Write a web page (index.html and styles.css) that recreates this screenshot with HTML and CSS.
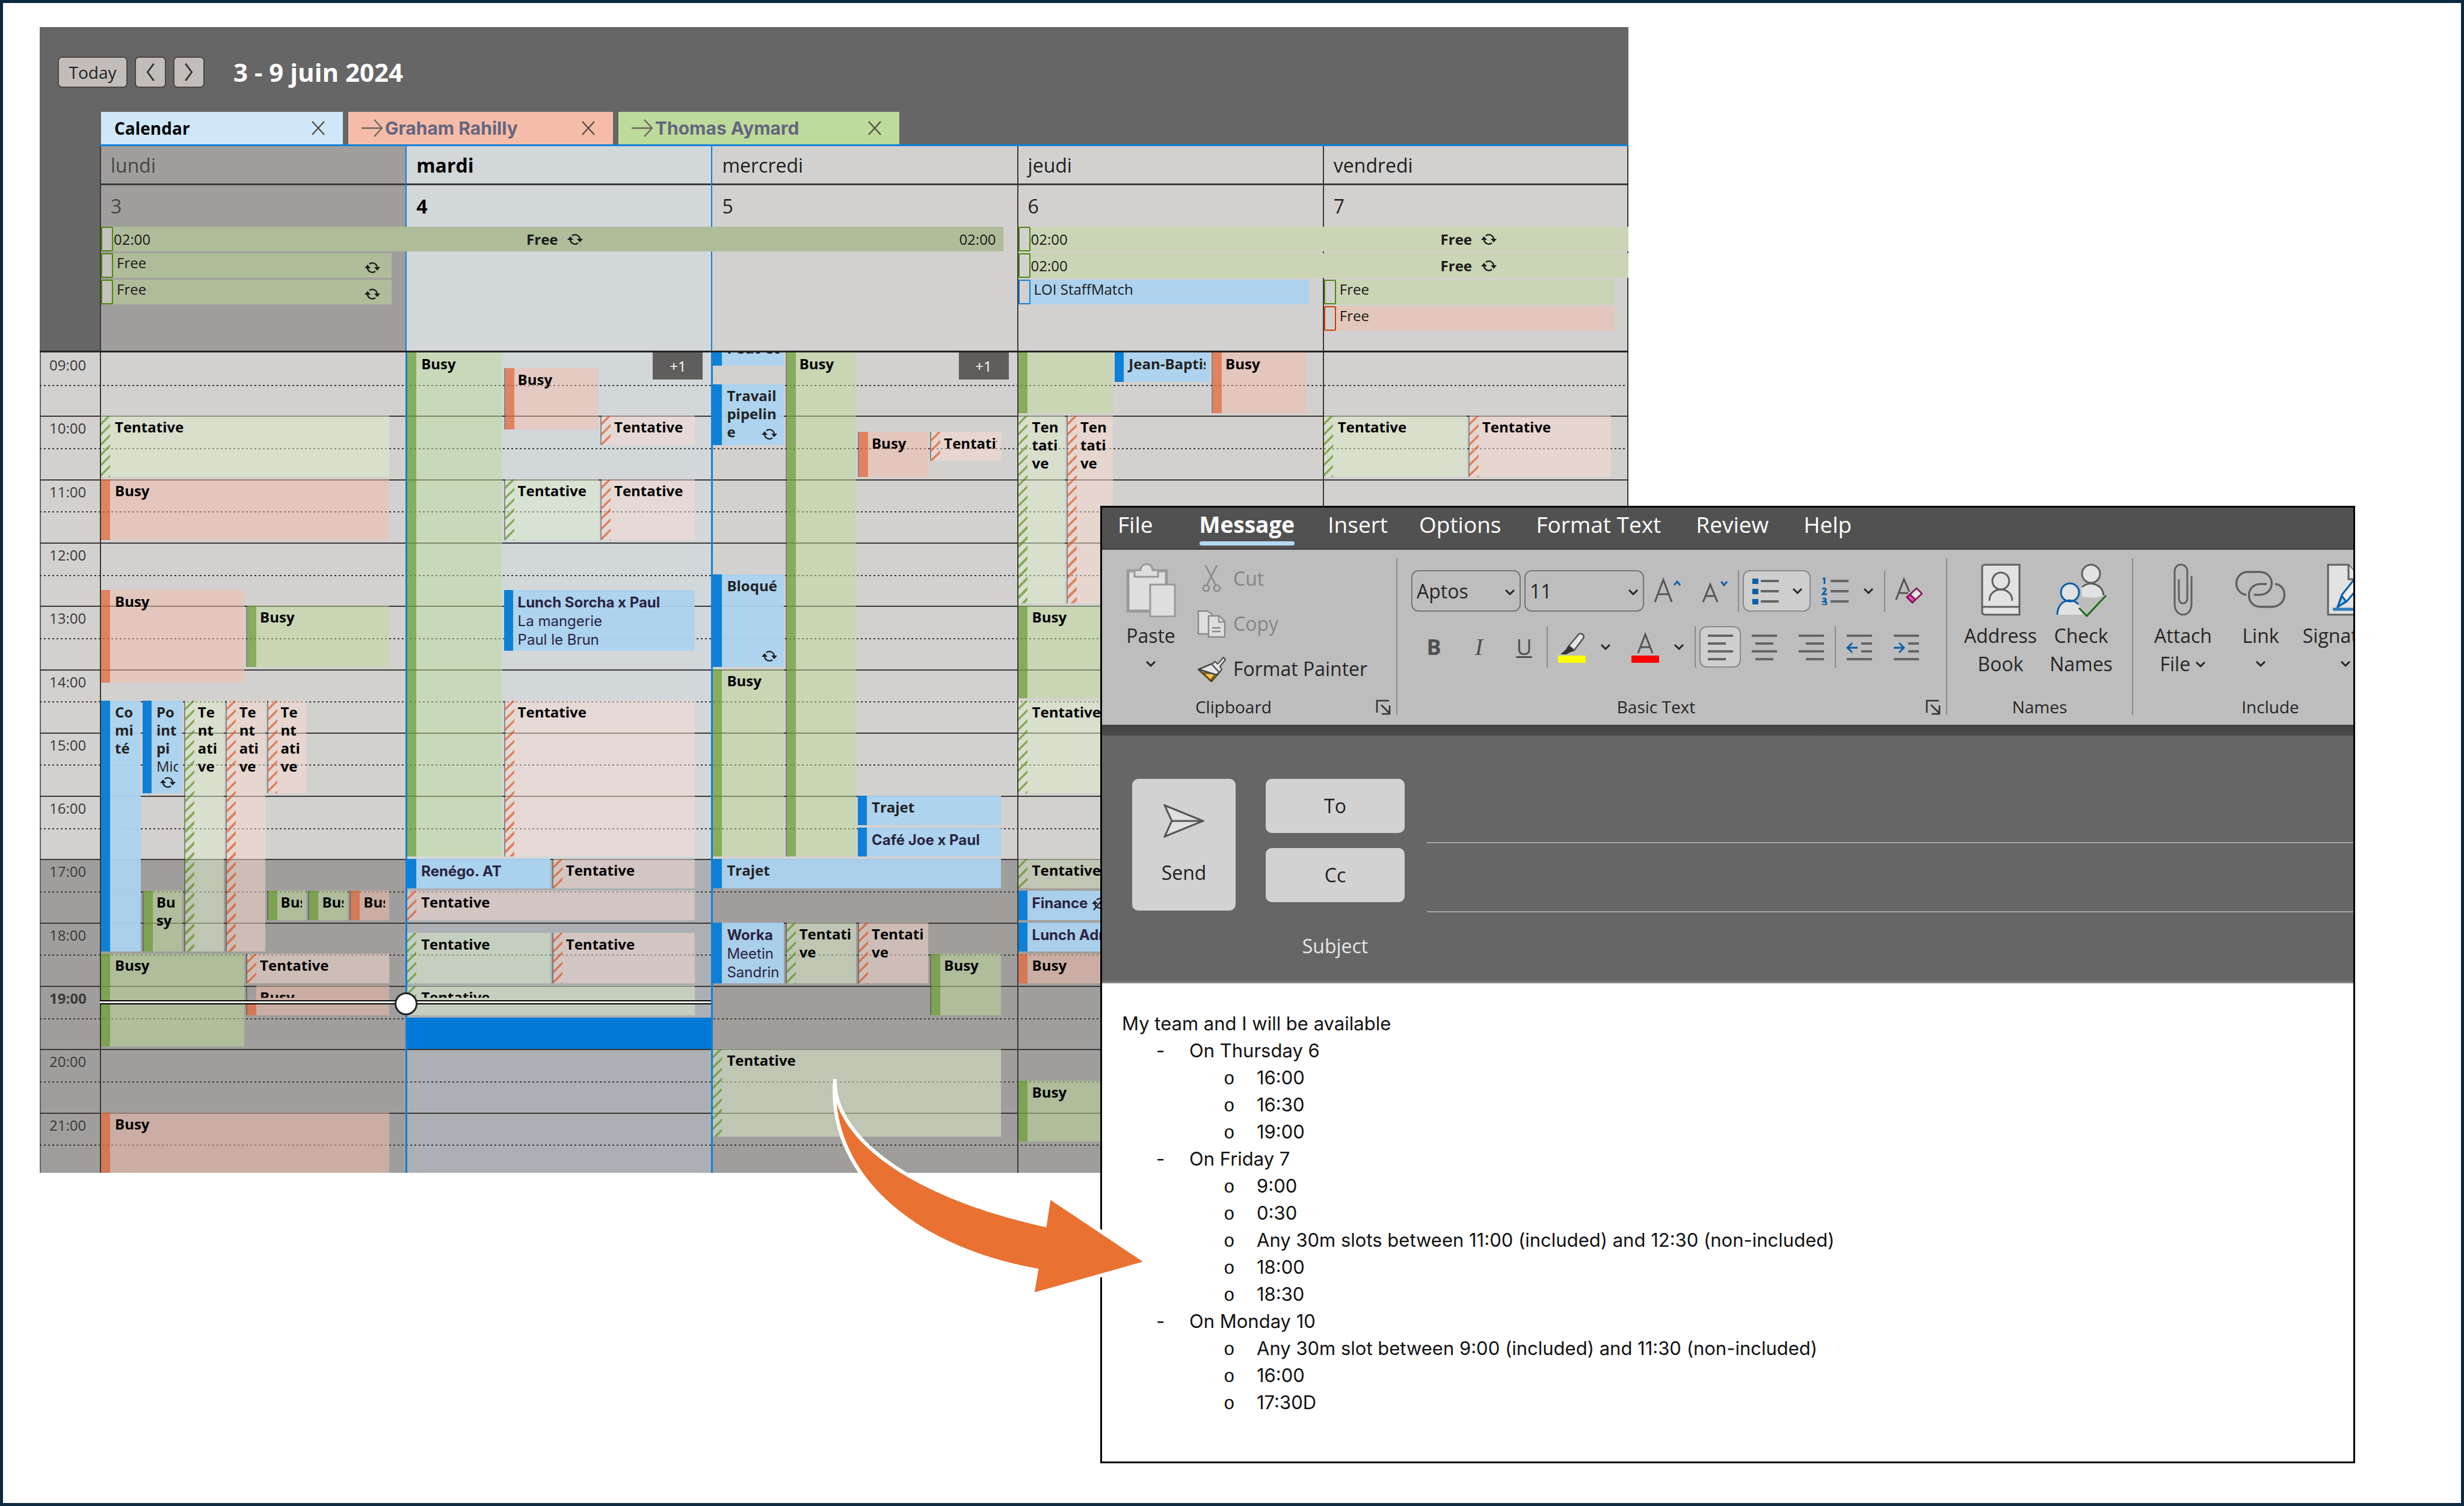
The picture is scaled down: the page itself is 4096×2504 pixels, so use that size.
FILE: index.html
```html
<!DOCTYPE html>
<html lang="en">
<head>
    <meta charset="UTF-8">
    <meta name="viewport" content="width=device-width, initial-scale=1.0">
    <title>Calendar availability to message</title>
    <link rel="stylesheet" href="styles.css">
</head>
<body>
    <!-- Shared icons -->
    <svg class="sprite" aria-hidden="true">
        <symbol id="recur" viewBox="0 0 28 24">
            <path d="M9 6a8 8 0 0 1 13 6M19 18a8 8 0 0 1-13-6" fill="none" stroke="currentColor" stroke-width="2.4"/>
            <path d="M17 11h10l-5 6zM1 13h10l-5-6z" fill="currentColor"/>
        </symbol>
        <symbol id="chevron" viewBox="0 0 18 12">
            <path d="M2 2l7 7 7-7" fill="none" stroke="currentColor" stroke-width="3"/>
        </symbol>
        <symbol id="close" viewBox="0 0 22 26">
            <path d="M1 2l20 22M21 2L1 24" fill="none" stroke="currentColor" stroke-width="2.4"/>
        </symbol>
        <symbol id="arrow-right" viewBox="0 0 36 32">
            <path d="M0 16h34M21 2l13 14-13 14" fill="none" stroke="currentColor" stroke-width="2.4"/>
        </symbol>
        <symbol id="launcher" viewBox="0 0 26 26">
            <path d="M2 22V2h20M9 9l13 13M23 10v14H10" fill="none" stroke="#333" stroke-width="2.6"/>
        </symbol>
    </svg>

    <main class="slide">
        <section class="calendar">
            <header class="toolbar">
                <button class="nav-btn today">Today</button>
                <button class="nav-btn" aria-label="Previous week"><svg viewBox="0 0 16 34"><path d="M14 2L3 17l11 15"/></svg></button>
                <button class="nav-btn" aria-label="Next week"><svg viewBox="0 0 16 34"><path d="M2 2l11 15L2 32"/></svg></button>
                <h1>3 - 9 juin 2024</h1>
            </header>

            <div class="tabs">
                <div class="tab tab-own"><span>Calendar</span><button aria-label="Close"><svg><use href="#close"/></svg></button></div>
                <div class="tab tab-graham"><svg class="tab-arrow"><use href="#arrow-right"/></svg><span>Graham Rahilly</span><button aria-label="Close"><svg><use href="#close"/></svg></button></div>
                <div class="tab tab-thomas"><svg class="tab-arrow"><use href="#arrow-right"/></svg><span>Thomas Aymard</span><button aria-label="Close"><svg><use href="#close"/></svg></button></div>
            </div>

            <div class="week-head">
                <div class="day-head mon past"><h2>lundi</h2><p>3</p></div>
                <div class="day-head tue today"><h2>mardi</h2><p>4</p></div>
                <div class="day-head wed after-today"><h2>mercredi</h2><p>5</p></div>
                <div class="day-head thu"><h2>jeudi</h2><p>6</p></div>
                <div class="day-head fri"><h2>vendredi</h2><p>7</p></div>

                <!-- All day events -->
                <div class="allday green dim span mon-wed slot-1"><span>02:00</span><b>Free <svg><use href="#recur"/></svg></b><span>02:00</span></div>
                <div class="allday green dim mon slot-2"><span>Free</span><svg><use href="#recur"/></svg></div>
                <div class="allday green dim mon slot-3"><span>Free</span><svg><use href="#recur"/></svg></div>
                <div class="allday green span open thu-fri slot-1"><span>02:00</span><b>Free <svg><use href="#recur"/></svg></b></div>
                <div class="allday green span open thu-fri slot-2"><span>02:00</span><b>Free <svg><use href="#recur"/></svg></b></div>
                <div class="allday blue thu slot-3"><span>LOI StaffMatch</span></div>
                <div class="allday green fri slot-3"><span>Free</span></div>
                <div class="allday orange fri slot-4"><span>Free</span></div>
            </div>

            <div class="viewport">
                <div class="time-grid">
                    <div class="shade"></div>
                    <div class="shade shade-today"></div>
                    <ol class="hours">
                        <li>09:00</li>
                        <li>10:00</li>
                        <li>11:00</li>
                        <li>12:00</li>
                        <li>13:00</li>
                        <li>14:00</li>
                        <li>15:00</li>
                        <li>16:00</li>
                        <li>17:00</li>
                        <li>18:00</li>
                        <li class="now">19:00</li>
                        <li>20:00</li>
                        <li>21:00</li>
                    </ol>

                    <!-- Each day: 156 rows of 5 minutes from 09:00, 84 columns for overlaps -->
                    <div class="day mon">
                        <div class="event green tentative" style="grid-area: 13 / 1 / 25 / 85"><p>Tentative</p></div>
                        <div class="event orange" style="grid-area: 25 / 1 / 37 / 85"><p>Busy</p></div>
                        <div class="event orange" style="grid-area: 46 / 1 / 64 / 43"><p>Busy</p></div>
                        <div class="event green inner" style="grid-area: 49 / 43 / 61 / 85"><p>Busy</p></div>
                        <div class="event blue" style="grid-area: 67 / 1 / 115 / 13"><p>Co<br>mi<br>té</p></div>
                        <div class="event blue" style="grid-area: 67 / 13 / 85 / 25"><p>Po<br>int<br>pi<br><span>Mic</span></p><svg><use href="#recur"/></svg></div>
                        <div class="event green tentative inner" style="grid-area: 67 / 25 / 115 / 37"><p>Te<br>nt<br>ati<br>ve</p></div>
                        <div class="event orange tentative inner" style="grid-area: 67 / 37 / 115 / 49"><p>Te<br>nt<br>ati<br>ve</p></div>
                        <div class="event orange tentative inner" style="grid-area: 67 / 49 / 85 / 61"><p>Te<br>nt<br>ati<br>ve</p></div>
                        <div class="event green inner" style="grid-area: 103 / 13 / 115 / 25"><p>Bu<br>sy</p></div>
                        <div class="event green inner" style="grid-area: 103 / 49 / 109 / 61"><p>Busy</p></div>
                        <div class="event green inner" style="grid-area: 103 / 61 / 109 / 73"><p>Busy</p></div>
                        <div class="event orange inner" style="grid-area: 103 / 73 / 109 / 85"><p>Busy</p></div>
                        <div class="event green" style="grid-area: 115 / 1 / 133 / 43"><p>Busy</p></div>
                        <div class="event orange tentative inner" style="grid-area: 115 / 43 / 121 / 85"><p>Tentative</p></div>
                        <div class="event orange inner under-now" style="grid-area: 121 / 43 / 127 / 85"><p>Busy</p></div>
                        <div class="event orange" style="grid-area: 145 / 1 / 157 / 85"><p>Busy</p></div>
                    </div>

                    <div class="day tue today">
                        <div class="event green" style="grid-area: 1 / 1 / 97 / 29"><p>Busy</p></div>
                        <div class="event orange inner" style="grid-area: 4 / 29 / 16 / 57"><p>Busy</p></div>
                        <div class="event orange tentative inner" style="grid-area: 13 / 57 / 19 / 85"><p>Tentative</p></div>
                        <div class="event green tentative inner" style="grid-area: 25 / 29 / 37 / 57"><p>Tentative</p></div>
                        <div class="event orange tentative inner" style="grid-area: 25 / 57 / 37 / 85"><p>Tentative</p></div>
                        <div class="event blue named" style="grid-area: 46 / 29 / 58 / 85"><p>Lunch Sorcha x Paul<br><span>La mangerie<br>Paul le Brun</span></p></div>
                        <div class="event orange tentative inner" style="grid-area: 67 / 29 / 97 / 85"><p>Tentative</p></div>
                        <div class="event blue named" style="grid-area: 97 / 1 / 103 / 43"><p>Renégo. AT</p></div>
                        <div class="event orange tentative inner" style="grid-area: 97 / 43 / 103 / 85"><p>Tentative</p></div>
                        <div class="event orange tentative" style="grid-area: 103 / 1 / 109 / 85"><p>Tentative</p></div>
                        <div class="event green tentative" style="grid-area: 111 / 1 / 121 / 43"><p>Tentative</p></div>
                        <div class="event orange tentative inner" style="grid-area: 111 / 43 / 121 / 85"><p>Tentative</p></div>
                        <div class="event green tentative under-now" style="grid-area: 121 / 1 / 127 / 85"><p>Tentative</p></div>
                        <div class="selection"></div>
                        <button class="more">+1</button>
                    </div>

                    <div class="day wed after-today">
                        <div class="event blue earlier" style="grid-area: 1 / 1 / 4 / 22"><p>Peut-êt</p></div>
                        <div class="event green inner" style="grid-area: 1 / 22 / 97 / 43"><p>Busy</p></div>
                        <div class="event blue" style="grid-area: 7 / 1 / 19 / 22"><p>Travail<br>pipelin<br>e</p><svg><use href="#recur"/></svg></div>
                        <div class="event orange inner" style="grid-area: 16 / 43 / 25 / 64"><p>Busy</p></div>
                        <div class="event orange tentative inner" style="grid-area: 16 / 64 / 22 / 85"><p>Tentative</p></div>
                        <div class="event blue" style="grid-area: 43 / 1 / 61 / 22"><p>Bloqué</p><svg><use href="#recur"/></svg></div>
                        <div class="event green" style="grid-area: 61 / 1 / 97 / 22"><p>Busy</p></div>
                        <div class="event blue" style="grid-area: 85 / 43 / 91 / 85"><p>Trajet</p></div>
                        <div class="event blue named" style="grid-area: 91 / 43 / 97 / 85"><p>Café Joe x Paul</p></div>
                        <div class="event blue" style="grid-area: 97 / 1 / 103 / 85"><p>Trajet</p></div>
                        <div class="event blue named" style="grid-area: 109 / 1 / 121 / 22"><p>Worka<br><span>Meetin<br>Sandrin</span></p></div>
                        <div class="event green tentative inner" style="grid-area: 109 / 22 / 121 / 43"><p>Tentati<br>ve</p></div>
                        <div class="event orange tentative inner" style="grid-area: 109 / 43 / 121 / 64"><p>Tentati<br>ve</p></div>
                        <div class="event green inner" style="grid-area: 115 / 64 / 127 / 85"><p>Busy</p></div>
                        <div class="event green tentative" style="grid-area: 133 / 1 / 150 / 85"><p>Tentative</p></div>
                        <button class="more">+1</button>
                    </div>

                    <div class="day thu">
                        <div class="event green" style="grid-area: 1 / 1 / 13 / 29"></div>
                        <div class="event blue" style="grid-area: 1 / 29 / 7 / 57"><p>Jean-Baptiste</p></div>
                        <div class="event orange inner" style="grid-area: 1 / 57 / 13 / 85"><p>Busy</p></div>
                        <div class="event green tentative" style="grid-area: 13 / 1 / 49 / 15"><p>Ten<br>tati<br>ve</p></div>
                        <div class="event orange tentative inner" style="grid-area: 13 / 15 / 49 / 29"><p>Ten<br>tati<br>ve</p></div>
                        <div class="event green" style="grid-area: 49 / 1 / 67 / 85"><p>Busy</p></div>
                        <div class="event green tentative" style="grid-area: 67 / 1 / 85 / 85"><p>Tentative</p></div>
                        <div class="event green tentative" style="grid-area: 97 / 1 / 103 / 85"><p>Tentative</p></div>
                        <div class="event blue named" style="grid-area: 103 / 1 / 109 / 85"><p>Finance <svg class="exception"><use href="#recur"/><path d="M4 23L23 1" stroke="#222" stroke-width="2.4"/></svg></p></div>
                        <div class="event blue named" style="grid-area: 109 / 1 / 115 / 85"><p>Lunch Adrien</p></div>
                        <div class="event orange" style="grid-area: 115 / 1 / 121 / 85"><p>Busy</p></div>
                        <div class="event green" style="grid-area: 139 / 1 / 151 / 85"><p>Busy</p></div>
                    </div>

                    <div class="day fri">
                        <div class="event green tentative" style="grid-area: 13 / 1 / 25 / 43"><p>Tentative</p></div>
                        <div class="event orange tentative inner" style="grid-area: 13 / 43 / 25 / 85"><p>Tentative</p></div>
                    </div>

                    <div class="now-line"></div>
                </div>
            </div>
        </section>

        <section class="mail">
            <nav class="menu">
                <a href="#" class="file">File</a>
                <a href="#" class="active">Message</a>
                <a href="#">Insert</a>
                <a href="#">Options</a>
                <a href="#">Format Text</a>
                <a href="#">Review</a>
                <a href="#">Help</a>
            </nav>

            <div class="ribbon">
                <div class="group clipboard">
                    <div class="tools">
                        <button class="big paste">
                            <svg viewBox="0 0 82 90">
                                <path d="M3 13h64v67H3z" fill="#dedede" stroke="#999" stroke-width="5"/>
                                <path d="M14 23V12h10c0-6 4-10 10-10s10 4 10 10h9v11z" fill="#dedede" stroke="#999" stroke-width="3"/>
                                <path d="M40 36h41v53H40z" fill="#dedede" stroke="#999" stroke-width="3"/>
                            </svg>
                            <span>Paste</span>
                            <svg class="chev"><use href="#chevron"/></svg>
                        </button>
                        <div class="stack">
                            <button class="row off">
                                <svg viewBox="0 0 48 48"><g fill="none" stroke="#8a8a8a" stroke-width="2.6"><path d="M14 2l17 33M33 2L16 35"/><circle cx="15" cy="40" r="5"/><circle cx="33" cy="40" r="5"/></g></svg>
                                Cut
                            </button>
                            <button class="row off">
                                <svg viewBox="0 0 48 48"><g fill="#dedede" stroke="#8a8a8a" stroke-width="2.4"><path d="M2 3h15l8 5v33H2z"/><path d="M19 11h18l9 9v26H19z"/><path d="M36 11v10h10M25 31h14M25 37h14" fill="none"/></g></svg>
                                Copy
                            </button>
                            <button class="row">
                                <svg viewBox="0 0 48 48"><g stroke-width="2.4" stroke-linejoin="round"><path d="M10 31l12 13 9-12z" fill="#ffc44d" stroke="#7a5410"/><path d="M2 25l22-9 13 14-13 15z" fill="none" stroke="#5a4010"/><path d="M3 25l21-9 13 14-5 4z" fill="#e6e6e6" stroke="#444"/><path d="M24 16l6-4 4 4L44 5l3 4-9 11 3 5-4 5z" fill="#e6e6e6" stroke="#555"/></g></svg>
                                Format Painter
                            </button>
                        </div>
                    </div>
                    <footer>Clipboard<button aria-label="Clipboard options"><svg><use href="#launcher"/></svg></button></footer>
                </div>

                <div class="group basic">
                    <div class="tools lines">
                        <div class="line">
                            <label class="field font"><select aria-label="Font"><option>Aptos</option></select><svg><use href="#chevron"/></svg></label>
                            <label class="field size"><select aria-label="Font size"><option>11</option></select><svg><use href="#chevron"/></svg></label>
                            <button class="tool" aria-label="Grow font"><svg viewBox="0 0 46 46"><path d="M2 41L16 4l14 37M7 28h18" class="ink"/><path d="M34 13l5-6 5 6" class="accent"/></svg></button>
                            <button class="tool" aria-label="Shrink font"><svg viewBox="0 0 46 46"><path d="M4 41l12-29 12 29M8 31h16" class="ink"/><path d="M34 7l5 6 5-6" class="accent"/></svg></button>
                            <i class="sep"></i>
                            <button class="tool split on" aria-label="Bullets"><svg viewBox="0 0 46 46"><path d="M2 2h10v9H2zM2 19h10v9H2zM2 36h10v9H2z" fill="#0a5fa8"/><path d="M16 6h30M16 23h30M16 40h30" class="bar"/></svg><svg class="chev"><use href="#chevron"/></svg></button>
                            <button class="tool split numbers" aria-label="Numbering"><svg viewBox="0 0 46 46"><path d="M3 3l3-2v10" class="accent"/><path d="M3 20c1-3 6-2 5 1l-5 7h7" class="accent"/><path d="M3 36c2-2 6-1 5 2l-3 2c6 0 5 6 0 6l-3-1" class="accent"/><path d="M16 6h30M16 23h30M16 40h30" class="bar"/></svg><svg class="chev"><use href="#chevron"/></svg></button>
                            <i class="sep"></i>
                            <button class="tool" aria-label="Clear formatting"><svg viewBox="0 0 46 46"><path d="M2 37L15 3l9 21M7 26h15" class="ink"/><path d="M20 33l16-15 9 9-16 15z" fill="#e6e6e6" stroke="#8a0f5c" stroke-width="2.6"/><path d="M20 33l5-5 9 9-5 5z" fill="#d858a8" stroke="#8a0f5c" stroke-width="2.6"/></svg></button>
                        </div>
                        <div class="line">
                            <button class="tool letter"><b>B</b></button>
                            <button class="tool letter"><em>I</em></button>
                            <button class="tool letter"><u>U</u></button>
                            <i class="sep"></i>
                            <button class="tool split plain" aria-label="Highlight"><svg viewBox="0 0 46 52"><path d="M0 40h46v12H0z" fill="#ff0"/><path d="M18 24L34 5c3-4 11 1 8 6L27 31z" fill="#e6e6e6" stroke="#555" stroke-width="2.6"/><path d="M17 23l10 9-8 3-5 3H4l9-8z" fill="#333"/></svg><svg class="chev"><use href="#chevron"/></svg></button>
                            <button class="tool split plain" aria-label="Font color"><svg viewBox="0 0 46 52"><path d="M0 40h46v12H0z" fill="red"/><path d="M11 36L23 5l12 31M15 26h16" class="ink"/></svg><svg class="chev"><use href="#chevron"/></svg></button>
                            <i class="sep"></i>
                            <button class="tool on" aria-label="Align left"><svg viewBox="0 0 46 46"><path d="M2 4h42M2 17h30M2 30h42M2 43h30" class="bar"/></svg></button>
                            <button class="tool" aria-label="Center"><svg viewBox="0 0 46 46"><path d="M2 4h42M8 17h30M2 30h42M8 43h30" class="bar"/></svg></button>
                            <button class="tool" aria-label="Align right"><svg viewBox="0 0 46 46"><path d="M2 4h42M14 17h30M2 30h42M14 43h30" class="bar"/></svg></button>
                            <i class="sep"></i>
                            <button class="tool" aria-label="Decrease indent"><svg viewBox="0 0 46 46"><path d="M2 4h42M26 17h18M26 30h18M2 43h42" class="bar"/><path d="M20 24H4M11 16l-8 8 8 8" class="accent"/></svg></button>
                            <button class="tool" aria-label="Increase indent"><svg viewBox="0 0 46 46"><path d="M2 4h42M26 17h18M26 30h18M2 43h42" class="bar"/><path d="M2 24h16M11 16l8 8-8 8" class="accent"/></svg></button>
                        </div>
                    </div>
                    <footer>Basic Text<button aria-label="Text options"><svg><use href="#launcher"/></svg></button></footer>
                </div>

                <div class="group names">
                    <div class="tools">
                        <button class="big">
                            <svg viewBox="0 0 90 90"><g fill="#e2e2e2" stroke="#606060" stroke-width="3"><path d="M19 3h57v83H19c-4 0-5-2-5-5V8c0-3 1-5 5-5z"/><path d="M15 73h60" fill="none"/><circle cx="45" cy="30" r="14"/><path d="M26 63c0-25 38-25 38 0" fill="none"/></g></svg>
                            <span>Address<br>Book</span>
                        </button>
                        <button class="big">
                            <svg viewBox="0 0 90 90"><g fill="#e2e2e2" stroke-width="3"><path d="M45 37c12-10 35-2 37 18L66 58 46 56z" stroke="none"/><circle cx="61" cy="18" r="15" stroke="#606060"/><path d="M46 40c14-12 34-4 36 14" fill="none" stroke="#606060"/><path d="M5 86c0-26 26-30 36-16l6 16z" stroke="none"/><circle cx="26" cy="49" r="15" stroke="#0a5fa8"/><path d="M5 86c0-24 24-30 35-17" fill="none" stroke="#0a5fa8"/><path d="M41 75l13 13 32-34" fill="none" stroke="#1c6b1c"/></g></svg>
                            <span>Check<br>Names</span>
                        </button>
                    </div>
                    <footer>Names</footer>
                </div>

                <div class="group include">
                    <div class="tools">
                        <button class="big">
                            <svg viewBox="0 0 90 90"><path d="M38 27v32c0 11 14 11 14 0V14c0-15-21-15-21 0v54c0 24 28 24 28 0V22" fill="none" stroke="#606060" stroke-width="3"/></svg>
                            <span>Attach<br>File <svg class="chev"><use href="#chevron"/></svg></span>
                        </button>
                        <button class="big link">
                            <svg viewBox="0 0 90 90"><g fill="none" stroke="#606060" stroke-width="3.4"><path d="M21 53C-3 49 1 15 23 15h20c27 0 27 38 0 38H34"/><path d="M55 35H45c-26 0-26 38 0 38h18c27 0 28-36 6-38"/></g></svg>
                            <span>Link</span>
                            <svg class="chev"><use href="#chevron"/></svg>
                        </button>
                        <button class="big signature">
                            <svg viewBox="0 0 90 90"><g fill="#e2e2e2" stroke="#606060" stroke-width="3"><path d="M16 3h34l20 24v59H16z"/><path d="M50 3v24h20"/><path d="M32 73l7-20 32-40 11 9-35 42z" fill="#eee" stroke="#0a5fa8"/><path d="M32 73l7-18 7 9z" fill="#9cd0f4" stroke="#0a5fa8"/><path d="M24 77h46" stroke="#2d7cc0" stroke-width="5"/></g></svg>
                            <span>Signature</span>
                            <svg class="chev"><use href="#chevron"/></svg>
                        </button>
                    </div>
                    <footer>Include</footer>
                </div>
            </div>

            <form class="compose">
                <button type="button" class="send">
                    <svg viewBox="0 0 68 56"><path d="M2 2l64 26L2 54l12-26zM14 28h50" fill="#e0e0e0" stroke="#555" stroke-width="3"/></svg>
                    Send
                </button>
                <div class="fields">
                    <button type="button" class="addr">To</button><input type="text" aria-label="To">
                    <button type="button" class="addr">Cc</button><input type="text" aria-label="Cc">
                    <label for="subject">Subject</label><input type="text" id="subject" class="subject">
                </div>
            </form>

            <article class="message">
                <p>My team and I will be available</p>
                <ul>
                    <li>On Thursday 6
                        <ul>
                            <li>16:00</li>
                            <li>16:30</li>
                            <li>19:00</li>
                        </ul>
                    </li>
                    <li>On Friday 7
                        <ul>
                            <li>9:00</li>
                            <li>0:30</li>
                            <li>Any 30m slots between 11:00 (included) and 12:30 (non-included)</li>
                            <li>18:00</li>
                            <li>18:30</li>
                        </ul>
                    </li>
                    <li>On Monday 10
                        <ul>
                            <li>Any 30m slot between 9:00 (included) and 11:30 (non-included)</li>
                            <li>16:00</li>
                            <li>17:30D</li>
                        </ul>
                    </li>
                </ul>
            </article>
        </section>

        <svg class="arrow" viewBox="1370 1780 550 390">
            <path d="M1388 1793C1384 1885 1505 1985 1737 2036L1744 1989 1907 2098 1716 2152 1723 2111C1500 2070 1375 1940 1388 1793z"/>
        </svg>
    </main>
</body>
</html>
```

FILE: styles.css
```css
* {
    box-sizing: border-box;
}

body {
    margin: 0;
    background-color: #fff;
    font-family: "Open Sans", "Noto Sans", sans-serif;
    font-size: 24px;
    line-height: 30px;
    color: #1f1f1f;
}

h1, h2, p, ul, ol {
    margin: 0;
    padding: 0;
    list-style: none;
}

button, input, select {
    margin: 0;
    padding: 0;
    border: none;
    background: none;
    font: inherit;
    color: inherit;
}

.sprite {
    position: absolute;
    width: 0;
    height: 0;
}

/* Slide: the two windows overlap in the middle cells of the grid */
.slide {
    position: relative;
    display: grid;
    grid-template-columns: 61fr 1763fr 878fr 1208fr 176fr;
    grid-template-rows: 40fr 796fr 1109fr 483fr 66fr;
    height: 100vh;
    border: 5px solid #0b2a3f;
}

.calendar {
    grid-area: 2 / 2 / 4 / 4;
    isolation: isolate;
    display: flex;
    flex-direction: column;
    min-width: 0;
    min-height: 0;
    overflow: hidden;
    background-color: #666;
}

.mail {
    grid-area: 3 / 3 / 5 / 5;
    z-index: 1;
    display: flex;
    flex-direction: column;
    min-width: 0;
    min-height: 0;
    overflow: hidden;
    background-color: #fff;
    border: 3px solid #000;
}

/* Calendar toolbar */
.toolbar {
    display: flex;
    align-items: center;
    gap: 12px;
    height: 141px;
    padding: 9px 0 0 30px;
}

.nav-btn {
    display: flex;
    align-items: center;
    justify-content: center;
    width: 52px;
    height: 52px;
    background-color: #c2bdb9;
    border: 2px solid #4a4643;
    border-radius: 7px;
}

.nav-btn.today {
    width: 116px;
    font-size: 28px;
}

.nav-btn svg {
    width: 16px;
    height: 32px;
    fill: none;
    stroke: #333;
    stroke-width: 3;
}

.toolbar h1 {
    margin-left: 36px;
    font-size: 42px;
    line-height: 52px;
    font-weight: 700;
    color: #fff;
}

.tabs {
    display: flex;
    gap: 9px;
    margin-left: 102px;
}

.tab {
    display: flex;
    align-items: center;
    height: 54px;
    padding: 0 30px 0 22px;
    font-family: Inter, sans-serif;
    font-size: 30px;
    font-weight: 700;
    color: #65657f;
}

.tab button {
    display: flex;
    margin-left: auto;
}

.tab button svg {
    width: 22px;
    height: 26px;
    color: #55504c;
}

.tab-own {
    width: 402px;
    background-color: #cfe7f8;
    font-family: "Open Sans", sans-serif;
    font-size: 28px;
    color: #000;
}

.tab-graham {
    width: 440px;
    background-color: #f5bda9;
}

.tab-thomas {
    width: 467px;
    background-color: #bddb9a;
}

.tab-arrow {
    width: 36px;
    height: 32px;
    margin-right: 3px;
    color: #6f6660;
}

/* Day names and all day events */
.week-head {
    display: grid;
    grid-template-columns: 100px repeat(5, 1fr);
    grid-template-rows: 65px 69px repeat(4, 44px) 30px;
    background: linear-gradient(#0f80d7, #0f80d7) 100px 0 / 100% 3px no-repeat;
    padding-top: 3px;
    border-bottom: 3px solid #252423;
}

.day-head {
    grid-row: 1 / -1;
    background-color: #d3d1cf;
    border-left: 2px solid #3b3a38;
    font-size: 32px;
}

.day-head.past {
    background-color: #a09e9c;
    color: #484644;
}

.day-head.today {
    background-color: #d2d7da;
    border-color: #0f80d7;
    color: #000;
}

.day-head.after-today {
    border-color: #0f80d7;
}

.day-head.fri {
    border-right: 2px solid #3b3a38;
}

.day-head h2,
.day-head p {
    padding-left: 16px;
    font-size: 32px;
    font-weight: 400;
}

.day-head h2 {
    height: 65px;
    line-height: 64px;
    border-bottom: 3px solid #3b3a38;
}

.day-head p {
    line-height: 69px;
}

.day-head.today h2,
.day-head.today p {
    font-weight: 700;
}

.mon { grid-column: 2; }
.tue { grid-column: 3; }
.wed { grid-column: 4; }
.thu { grid-column: 5; }
.fri { grid-column: 6; }
.mon-wed { grid-column: 2 / 5; }
.thu-fri { grid-column: 5 / 7; }
.slot-1 { grid-row: 3; }
.slot-2 { grid-row: 4; }
.slot-3 { grid-row: 5; }
.slot-4 { grid-row: 6; }

.allday {
    --tone: #4e8a0b;
    display: flex;
    justify-content: space-between;
    margin: 0 23px 3px 2px;
    padding: 0 18px 0 0;
    line-height: 32px;
    color: #1a1a1a;
    background-color: #c9d5b4;
}

/* Outlined handle at the start of a free event */
.allday::before {
    content: "";
    flex: none;
    width: 16px;
    background-color: #d3d1cf;
    border: 2px solid var(--tone);
    border-radius: 2px;
}

.allday span:first-of-type {
    margin-right: auto;
    margin-left: 6px;
}

.allday > svg {
    align-self: flex-end;
    margin-bottom: 5px;
}

.allday svg {
    width: 28px;
    height: 24px;
}

.allday.dim {
    background-color: #afbc9a;
}

.allday.dim::before {
    background-color: #c4c3bd;
}

.allday.blue {
    --tone: #0f80d7;
    background-color: #aed2ee;
}

.allday.orange {
    --tone: #d83b01;
    background-color: #e4c7bc;
}

.allday.span {
    padding-right: 12px;
    line-height: 41px;
}

.allday.span span:first-of-type {
    margin-left: 1px;
}

.allday.span b {
    display: flex;
    align-items: center;
    gap: 14px;
    margin-right: auto;
}

.allday.open {
    margin-right: 0;
}

.allday.open b {
    margin-right: 206px;
}

/* Time grid, cut off just before 22:00 */
.viewport {
    flex: 1;
    min-height: 0;
    overflow: hidden;
}

.time-grid {
    position: relative;
    display: grid;
    grid-template-columns: 100px repeat(5, 1fr);
    grid-template-rows: 1369px;
}

.shade,
.hours {
    grid-area: 1 / 1 / 2 / -1;
}

.shade {
    --work: #d3d1cf;
    --off: #a09e9c;
    background: linear-gradient(var(--work) calc(800% / 13), var(--off) 0);
    border-left: 2px solid #666;
}

.shade-today {
    --work: #d2d7da;
    --off: #acb0b4;
    grid-column: 3;
}

.hours {
    display: grid;
    grid-auto-rows: 1fr;
}

.hours li {
    position: relative;
    padding: 4px 0 0 16px;
    border-top: 2px solid #3b3a38;
    color: #3b3a39;
}

.hours li:first-child {
    border-top-color: transparent;
}

.hours li::after {
    content: "";
    position: absolute;
    top: 50%;
    left: 0;
    right: 0;
    height: 2px;
    background: repeating-linear-gradient(90deg, #3b3a38 0 3px, transparent 3px 7px);
}

.hours .now {
    font-weight: 700;
}

.day {
    position: relative;
    grid-row: 1;
    display: grid;
    grid-template-columns: repeat(84, minmax(0, 1fr));
    grid-template-rows: repeat(156, minmax(0, 1fr));
    padding-right: 24px;
    border-left: 2px solid #3b3a38;
}

.day.today,
.day.after-today {
    border-left: 3px solid #0f80d7;
}

.day.fri {
    border-right: 2px solid #3b3a38;
}

/* Events */
.event {
    position: relative;
    display: flex;
    min-width: 0;
    margin: 0 3px 4px 0;
    overflow: hidden;
    color: #000;
    font-weight: 700;
}

.event::before {
    content: "";
    flex: none;
    width: 15px;
    background: var(--bar);
}

.event::after {
    content: "";
    position: absolute;
    inset: 0 0 0 15px;
    background-color: var(--fill);
}

.event.inner {
    border-left: 2px solid rgba(59, 58, 56, 0.5);
}

.event p {
    position: relative;
    z-index: 1;
    flex: 1;
    min-width: 0;
    margin-right: 7px;
    padding: 4px 0 0 8px;
    overflow: hidden;
    white-space: nowrap;
}

.event.inner p {
    padding-left: 6px;
}

.event span {
    font-weight: 400;
}

.event > svg {
    position: absolute;
    z-index: 1;
    right: 10px;
    bottom: 6px;
    width: 28px;
    height: 24px;
    color: #222;
}

.event.green {
    --bar: rgba(116, 163, 63, 0.8);
    --fill: rgba(190, 219, 153, 0.5);
}

.event.orange {
    --bar: rgba(227, 110, 67, 0.8);
    --fill: rgba(245, 189, 169, 0.5);
}

.event.blue {
    --bar: #0f80d7;
    --fill: rgba(170, 210, 240, 0.94);
    color: #222;
}

.event.green.tentative {
    --fill: rgba(221, 237, 201, 0.5);
}

.event.orange.tentative {
    --fill: rgba(249, 219, 207, 0.5);
}

.event.tentative::before {
    background: repeating-linear-gradient(135deg, var(--fill) 0 8px, var(--bar) 8px 12px);
}

.event.named {
    font-family: Inter, sans-serif;
    line-height: 31px;
    color: #2a2440;
}

.event.named p {
    margin-right: 0;
    padding-top: 5px;
}

/* Event that started before the first visible hour */
.event.earlier p {
    margin-top: -26px;
}

/* Title is cut by the current time line */
.event.under-now p {
    height: 20px;
}

.event.orange.under-now::before {
    background: linear-gradient(transparent 50%, var(--bar) 0);
}

.exception {
    width: 28px;
    height: 24px;
    vertical-align: -4px;
    color: #222;
}

.selection {
    grid-area: 127 / 1 / 133 / 85;
    margin-right: -24px;
    background-color: #0078d7;
}

.more {
    position: absolute;
    top: 0;
    right: 14px;
    width: 83px;
    height: 45px;
    background-color: #605e5c;
    color: #fff;
}

.now-line {
    position: relative;
    grid-area: 1 / 2 / 2 / 4;
    align-self: start;
    height: 7px;
    margin-top: 1077px;
    background-color: #fff;
    border: solid #000;
    border-width: 2px 0;
}

.now-line::after {
    content: "";
    position: absolute;
    left: 50%;
    top: 50%;
    width: 32px;
    height: 32px;
    margin: -17px 0 0 -18px;
    background-color: #fff;
    border: 3px solid #222;
    border-radius: 50%;
}

/* Mail window */
.menu {
    display: flex;
    flex: none;
    height: 70px;
    background-color: #515151;
    border-bottom: 2px solid #3c3c3c;
    font-size: 37px;
    line-height: 56px;
    color: #fff;
}

.menu a {
    height: 62px;
    margin: 0 29px;
    color: inherit;
    text-decoration: none;
}

.menu .file {
    margin-right: 48px;
    margin-left: 26px;
}

.menu .active {
    margin-right: 26px;
    font-weight: 700;
}

.menu .active::after {
    content: "";
    display: block;
    height: 7px;
    background-color: #b5d9f3;
    border-radius: 4px;
}

.menu .active + a {
    margin-right: 23px;
}

.ribbon {
    display: flex;
    flex: none;
    height: 291px;
    padding: 14px 0 16px;
    background-color: #bdbdbd;
    font-size: 32px;
    line-height: 47px;
    color: #262626;
    overflow: hidden;
}

.group {
    display: flex;
    flex-direction: column;
    flex: none;
    border-right: 2px solid #8c8c8c;
}

.group footer {
    position: relative;
    margin-top: auto;
    font-size: 28px;
    line-height: 28px;
    text-align: center;
}

.group footer button {
    position: absolute;
    right: 8px;
    bottom: 0;
    display: flex;
}

.group footer svg {
    width: 26px;
    height: 26px;
}

.tools {
    display: flex;
    justify-content: center;
}

.clipboard {
    width: 491px;
}

.clipboard .tools {
    justify-content: flex-start;
    padding-left: 14px;
}

.clipboard footer {
    padding-right: 52px;
}

.basic {
    width: 914px;
}

.basic footer {
    padding-right: 52px;
}

.names {
    width: 309px;
}

.names .tools {
    padding-left: 4px;
}

.include {
    width: 456px;
    border-right: none;
}

.include .tools {
    padding-right: 8px;
}

.big {
    display: flex;
    flex-direction: column;
    align-items: center;
    width: 134px;
    padding-top: 8px;
}

.big > svg:first-child {
    width: 90px;
    height: 90px;
    margin-bottom: 7px;
}

.big.link {
    width: 124px;
}

.big.signature {
    width: 158px;
}

.chev {
    flex: none;
    width: 18px;
    height: 12px;
}

.big > .chev {
    margin-top: 18px;
}

.big span .chev {
    margin-bottom: 5px;
}

.stack {
    display: flex;
    flex-direction: column;
    padding-left: 10px;
    margin-top: -4px;
}

.row {
    display: flex;
    align-items: center;
    gap: 12px;
    height: 75px;
}

.row svg {
    width: 48px;
    height: 48px;
}

.row.off {
    color: #858585;
}

.lines {
    flex-direction: column;
    gap: 24px;
    padding: 20px 0 0 23px;
}

.line {
    display: flex;
    height: 69px;
}

.field {
    position: relative;
    height: 69px;
    border: 2px solid #757575;
    border-radius: 12px;
}

.field select {
    appearance: none;
    width: 100%;
    height: 100%;
    padding-left: 7px;
}

.field svg {
    position: absolute;
    right: 7px;
    top: 29px;
    width: 18px;
    height: 12px;
    pointer-events: none;
}

.field.font {
    width: 182px;
    margin-right: 6px;
}

.field.size {
    width: 199px;
}

.tool {
    display: flex;
    align-items: center;
    justify-content: center;
    width: 78px;
    border: 2px solid transparent;
    border-radius: 12px;
}

.tool > svg:first-child {
    width: 46px;
    height: 46px;
}

.tool.on {
    width: 69px;
    margin-left: 6px;
    background-color: #cecece;
    border-color: #8a8a8a;
}

.tool.split {
    gap: 24px;
    width: 122px;
}

.tool.split.on {
    gap: 22px;
    width: 113px;
}

.tool.plain > svg:first-child {
    height: 52px;
}

.letter {
    width: 75px;
    font-size: 36px;
    color: #505050;
}

.letter em {
    font-family: "Liberation Serif", serif;
    font-size: 40px;
}

.sep {
    width: 2px;
    background-color: #8c8c8c;
}

.ink {
    fill: none;
    stroke: #555;
    stroke-width: 3;
}

.bar {
    fill: none;
    stroke: #666;
    stroke-width: 4;
}

.accent {
    fill: none;
    stroke: #0a5fa8;
    stroke-width: 2.8;
}

/* Send / To / Cc / Subject */
.compose {
    display: flex;
    flex: none;
    height: 430px;
    padding: 82px 0 0 50px;
    background: linear-gradient(#404040, #4c4c4c 18px, #666 18px);
    border-bottom: 3px solid #858585;
    font-size: 32px;
    line-height: 44px;
}

.send,
.addr {
    background-color: #d2d2d2;
    border-radius: 10px;
}

.send {
    display: flex;
    flex-direction: column;
    align-items: center;
    justify-content: center;
    gap: 36px;
    width: 172px;
    height: 219px;
    margin: 8px 50px 0 0;
}

.send svg {
    width: 68px;
    height: 56px;
}

.fields {
    flex: 1;
    display: grid;
    grid-template-columns: 231px 1fr;
    grid-auto-rows: 115px;
    column-gap: 37px;
}

.addr {
    height: 90px;
    margin-top: 8px;
}

.fields input {
    min-width: 0;
    border-bottom: 2px solid #a3a3a3;
    outline: none;
}

.fields label {
    line-height: 112px;
    text-align: center;
    color: #e6e6e6;
}

.fields .subject {
    border-bottom: none;
}

/* Message text */
.message {
    padding: 44px 33px;
    font-family: Inter, sans-serif;
    font-size: 31px;
    line-height: 45px;
    color: #111;
}

.message ul {
    padding-left: 112px;
}

.message li::before {
    content: "-";
    display: inline-block;
    width: 55px;
    margin-left: -55px;
    line-height: 30px;
}

.message li li::before {
    content: "o";
    font-family: "Liberation Mono", monospace;
}

/* Arrow from the calendar to the message */
.arrow {
    position: absolute;
    z-index: 2;
    left: 33.4%;
    top: 71.2%;
    width: 13.46%;
}

.arrow path {
    fill: #e97132;
    stroke: #fff;
    stroke-width: 6;
}
```
